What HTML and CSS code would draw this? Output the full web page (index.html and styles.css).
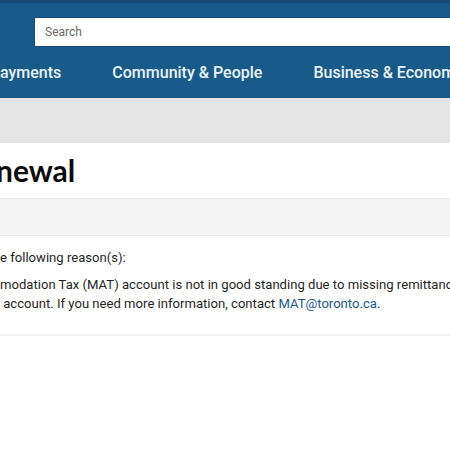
FILE: index.html
```html
<!DOCTYPE html>
<html lang="en">
<head>
<meta charset="utf-8">
<title>Renewal</title>
<link rel="stylesheet" href="styles.css">
</head>
<body>
<header class="header">
  <div class="topline"></div>
  <div class="search-row">
    <input class="search" type="text" placeholder="Search">
  </div>
  <nav class="nav">
    <span class="nav-item">ayments</span>
    <span class="nav-item">Community &amp; People</span>
    <span class="nav-item">Business &amp; Economy</span>
  </nav>
</header>
<div class="crumbs"></div>
<main class="main">
  <h1 class="title">newal</h1>
  <div class="band"></div>
  <section class="content">
    <p class="lead">e following reason(s):</p>
    <p class="reason">modation Tax (MAT) account is not in good standing due to missing remittances<br>&nbsp;account. If you need more information, contact <a class="link" href="#">MAT@toronto.ca</a>.</p>
  </section>
  <div class="rule"></div>
</main>
</body>
</html>
```
FILE: styles.css
```css
* { box-sizing: border-box; }
html, body { margin: 0; padding: 0; }
body {
  width: 450px;
  height: 450px;
  overflow: hidden;
  background: #ffffff;
  font-family: Roboto, "Liberation Sans", sans-serif;
  color: #1f1f1f;
}
.header {
  background: #1a5a8a;
  height: 98px;
  display: flex;
  flex-direction: column;
}
.topline {
  height: 3px;
  background: #174a73;
}
.search-row {
  padding: 14px 0 0 34px;
  height: 47px;
}
.search {
  display: block;
  width: 440px;
  height: 30px;
  border: 1px solid #154f7c;
  border-right: none;
  background: #fff;
  padding: 0 0 0 10px;
  font-family: Roboto, "Liberation Sans", sans-serif;
  font-size: 12px;
  color: #333;
  outline: none;
}
.search::placeholder { color: #6b6b6b; }
.nav {
  display: flex;
  gap: 51px;
  white-space: nowrap;
  overflow: hidden;
  padding-top: 13px;
}
.nav-item {
  font-size: 16px;
  font-weight: 500;
  color: #e9f5ff;
  line-height: 20px;
  flex-shrink: 0;
}
.crumbs {
  height: 45px;
  background: #e4e4e4;
}
.main { display: flex; flex-direction: column; }
.title {
  margin: 0;
  height: 55px;
  padding-top: 9px;
  font-family: Lato, "Liberation Sans", sans-serif;
  font-weight: 700;
  font-size: 30px;
  line-height: 36px;
  text-indent: -4px;
  white-space: nowrap;
  overflow: hidden;
  color: #0b0b0b;
}
.band {
  height: 38px;
  background: #f4f4f4;
  border-top: 1px solid #e9e9e9;
  border-bottom: 1px solid #e9e9e9;
}
.content {
  padding-top: 12px;
  white-space: nowrap;
  overflow: hidden;
  font-size: 13.1px;
  line-height: 19px;
  color: #1f1f1f;
}
.content p { margin: 0; }
.lead { margin-bottom: 8px !important; }
.link { color: #1d5a85; text-decoration: none; }
.rule {
  margin-top: 21px;
  height: 2px;
  background: #f1f1f1;
}
```
